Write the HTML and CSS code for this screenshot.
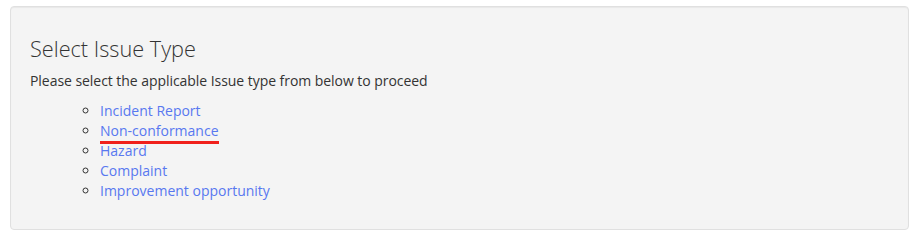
FILE: index.html
```html
<!DOCTYPE html>
<html>
<head>
<meta charset="utf-8">
<link rel="stylesheet" href="styles.css">
</head>
<body>
<div class="page">
  <div class="well">
    <h3 class="title">Select Issue Type</h3>
    <p class="lead">Please select the applicable Issue type from below to proceed</p>
    <ul class="types">
      <li><a href="#">Incident Report</a></li>
      <li><a href="#" class="marked">Non-conformance</a></li>
      <li><a href="#">Hazard</a></li>
      <li><a href="#">Complaint</a></li>
      <li><a href="#">Improvement opportunity</a></li>
    </ul>
  </div>
</div>
</body>
</html>
```
FILE: styles.css
```css
html, body {
  margin: 0;
  padding: 0;
  background: #ffffff;
}
body {
  font-family: "Open Sans", "Liberation Sans", sans-serif;
  color: #333333;
  font-size: 14px;
}
.page {
  padding: 6px 12px 0 10px;
}
.well {
  background: #f4f4f4;
  border: 1px solid #e0e0e0;
  border-radius: 4px;
  box-shadow: inset 0 1px 1px rgba(0,0,0,0.05);
  height: 224px;
  box-sizing: border-box;
  padding: 28px 19px 19px 19px;
}
.title {
  margin: 0;
  font-size: 21.7px;
  font-weight: 300;
  line-height: 27px;
  color: #333;
}
.lead {
  margin: 9px 0 0 0;
  line-height: 20px;
  letter-spacing: -0.05px;
}
.types {
  margin: 10px 0 0 0;
  padding-left: 70px;
  list-style: circle;
  line-height: 20px;
}
.types a {
  color: #5878f0;
  text-decoration: none;
}
.marked {
  position: relative;
}
.marked::after {
  content: "";
  position: absolute;
  left: 0;
  right: 0;
  bottom: -4px;
  height: 3px;
  background: #f0201c;
}
```
